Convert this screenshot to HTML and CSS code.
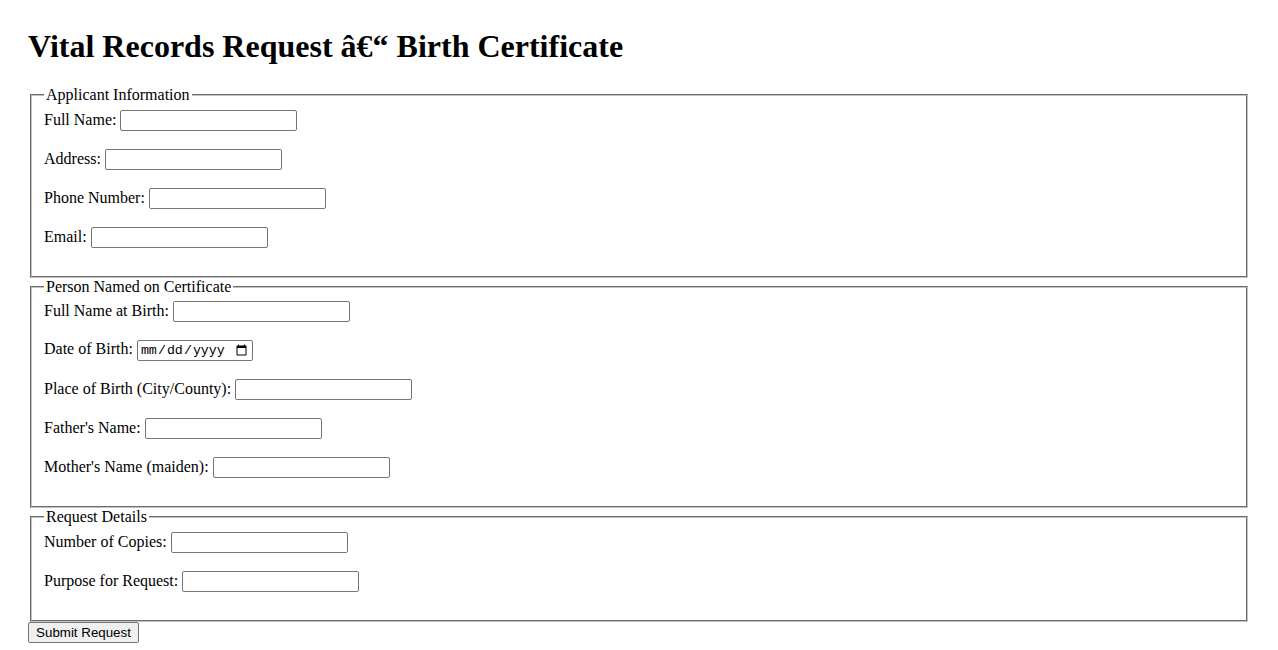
FILE: index.html
```html
<!DOCTYPE html>
<html>
<head>
<meta charset="utf-8">
<title>Vital Records Request</title>
<link rel="stylesheet" href="styles.css">
</head>
<body>
<h1 class="title">Vital Records Request â€“ Birth Certificate</h1>
<form class="form">
  <fieldset class="group">
    <legend class="legend">Applicant Information</legend>
    <label class="lbl">Full Name:</label> <input class="field" type="text"><br><br>
    <label class="lbl">Address:</label> <input class="field" type="text"><br><br>
    <label class="lbl">Phone Number:</label> <input class="field" type="text"><br><br>
    <label class="lbl">Email:</label> <input class="field" type="text"><br><br>
  </fieldset>
  <fieldset class="group">
    <legend class="legend">Person Named on Certificate</legend>
    <label class="lbl">Full Name at Birth:</label> <input class="field" type="text"><br><br>
    <label class="lbl">Date of Birth:</label> <input class="date" type="date"><br><br>
    <label class="lbl">Place of Birth (City/County):</label> <input class="field" type="text"><br><br>
    <label class="lbl">Father's Name:</label> <input class="field" type="text"><br><br>
    <label class="lbl">Mother's Name (maiden):</label> <input class="field" type="text"><br><br>
  </fieldset>
  <fieldset class="group">
    <legend class="legend">Request Details</legend>
    <label class="lbl">Number of Copies:</label> <input class="field" type="text"><br><br>
    <label class="lbl">Purpose for Request:</label> <input class="field" type="text"><br><br>
  </fieldset>
  <button class="submit" type="button">Submit Request</button>
</form>
</body>
</html>
```
FILE: styles.css
```css
body {
  margin: 28px;
  font-family: "Liberation Serif", "Times New Roman", serif;
  font-size: 16px;
  color: #000;
  background: #fff;
}
.title {
  font-size: 32px;
  font-weight: bold;
  margin: 0 0 21px 0;
}
.form {
  margin: 0;
}
.group {
  margin: 0 2px;
  padding: 0.35em 0.75em 0.625em 0.75em;
  border: 2px groove #c0c0c0;
}
.legend {
  padding: 0 2px;
}
.field {
  box-sizing: border-box;
  width: 177px;
  height: 21px;
  font-family: "Liberation Sans", Arial, sans-serif;
  font-size: 13.33px;
  border: 1px solid #767676;
  border-radius: 2px;
  padding: 1px 2px;
  vertical-align: baseline;
}
.date {
  box-sizing: border-box;
  width: 116px;
  height: 21px;
  font-family: "Liberation Mono", monospace;
  font-size: 13.33px;
  border: 1px solid #767676;
  border-radius: 2px;
  padding: 1px 2px;
}
.submit {
  font-family: "Liberation Sans", Arial, sans-serif;
  font-size: 13.33px;
  padding: 1px 6px;
  border: 1px solid #767676;
  border-radius: 2px;
  background: #efefef;
  color: #000;
  height: 21px;
  width: 111px;
}
```
